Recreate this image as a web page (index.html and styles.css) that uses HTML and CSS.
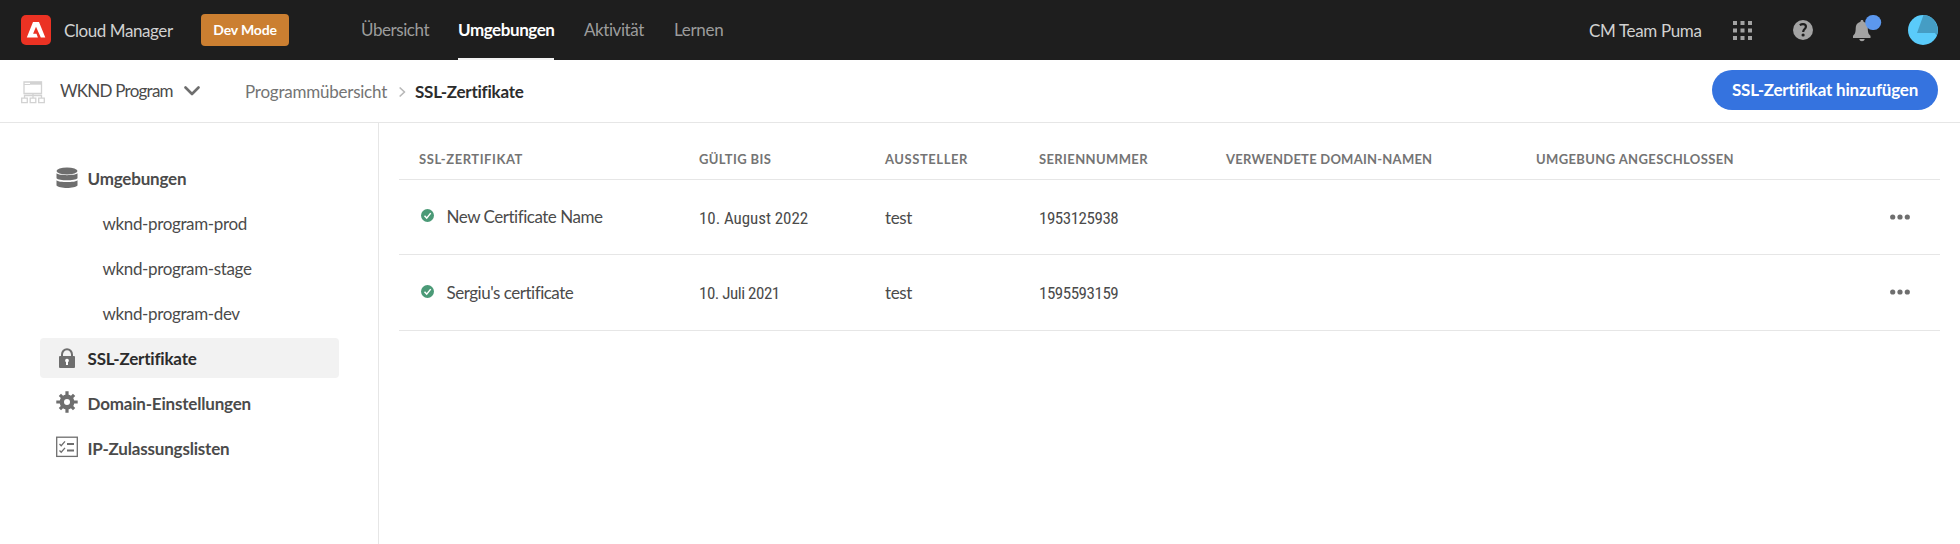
FILE: index.html
```html
<!DOCTYPE html>
<html lang="de">
<head>
<meta charset="utf-8">
<title>Cloud Manager – SSL-Zertifikate</title>
<link rel="stylesheet" href="styles.css">
</head>
<body>
<header class="topbar">
  <svg class="logo" viewBox="0 0 30 30"><rect width="30" height="30" rx="5" fill="#eb3223"/><path fill="#fff" d="M12 7h6l6.300 15.500h-4.500L15 11.800l-2.900 7h3.400l1.400 3.700H5.800z"/></svg>
  <span class="brand">Cloud Manager</span>
  <span class="mode">Dev Mode</span>
  <nav class="nav">
    <a class="tab overview">Übersicht</a>
    <a class="tab environments active">Umgebungen</a>
    <a class="tab activity">Aktivität</a>
    <a class="tab learn">Lernen</a>
  </nav>
  <div class="tools">
    <span class="org">CM Team Puma</span>
    <svg class="apps" viewBox="0 0 19 19" fill="#a3a3a3"><path d="M0 0h4v4H0zM7.500 0h4v4h-4zM15 0h4v4h-4zM0 7.500h4v4H0zM7.500 7.500h4v4h-4zM15 7.500h4v4h-4zM0 15h4v4H0zM7.500 15h4v4h-4zM15 15h4v4h-4z"/></svg>
    <svg class="help" viewBox="0 0 20 20"><circle cx="10" cy="10" r="10" fill="#a3a3a3"/><path d="M6.800 5.200C8 4.400 9 4.200 10 4.200c1.800 0 2.900 1 2.900 2.500 0 2.300-2.700 2.500-2.700 5.200" fill="none" stroke="#1e1e1e" stroke-width="2.200"/><circle cx="10.100" cy="15" r="1.600" fill="#1e1e1e"/></svg>
    <svg class="bell" viewBox="0 0 30 30"><path fill="#a3a3a3" d="M9 5c1.100 0 1.500.700 1.500 1.700 3 .800 4.300 3.300 4.300 6.500 0 4.500 1 6 2.700 7.500V23H0v-2.300c1.700-1.500 2.700-3 2.700-7.500 0-3.200 1.600-5.700 4.800-6.500C7.500 5.700 7.900 5 9 5zM6.300 24h5.400c-.300 1.500-1.300 2.200-2.700 2.200S6.600 25.500 6.300 24z"/><rect x="12.200" width="16" height="15" rx="7.500" fill="#5c98ee"/></svg>
    <svg class="avatar" viewBox="0 0 30 30"><circle cx="15" cy="15" r="15" fill="#5acbfa"/><path d="M15.500 0A15 15 0 0 1 28.600 20.600L27 18H9z" fill="#459dc4"/></svg>
  </div>
</header>
<div class="subbar">
  <svg class="program" viewBox="0 0 24 23" fill="none" stroke="#d2d2d2"><path d="M3 1h17.500v11.500H3zM12 12.500V17M3.500 17v-2.500h17V17M.7 17.200h5.600v4.500H.7zM9.200 17.200h5.600v4.500H9.200zM17.700 17.200h5.600v4.500h-5.600z" stroke-width="1.300"/><path d="M9 2.200h12" stroke-width="3"/><path d="M3 3.500h6" stroke-width="1"/></svg>
  <span class="program-name">WKND Program</span>
  <svg class="chev" viewBox="0 0 16 10"><path d="M1.500 1.500 8 8l6.500-6.500" fill="none" stroke="#6e6e6e" stroke-width="2.600" stroke-linecap="round" stroke-linejoin="round"/></svg>
  <span class="crumb">Programmübersicht</span>
  <svg class="sep" viewBox="0 0 7 10"><path d="M1.200 1 5.500 5l-4.300 4" fill="none" stroke="#b8b8b8" stroke-width="1.700" stroke-linecap="round" stroke-linejoin="round"/></svg>
  <span class="crumb current">SSL-Zertifikate</span>
  <button class="add">SSL-Zertifikat hinzufügen</button>
</div>
<div class="layout">
  <aside class="side">
    <a class="item"><svg viewBox="0 0 22 22" fill="#6e6e6e"><ellipse cx="11" cy="4" rx="10.500" ry="3.500"/><path d="M.5 6.300C3 8.800 19 8.800 21.500 6.300v4.900c-2.500 2.700-18.500 2.700-21 0zM.5 13.200c2.500 2.500 18.500 2.500 21 0v5.300c-2.500 3.300-18.500 3.300-21 0z"/></svg><span>Umgebungen</span></a>
    <a class="item child"><span>wknd-program-prod</span></a>
    <a class="item child"><span>wknd-program-stage</span></a>
    <a class="item child"><span>wknd-program-dev</span></a>
    <a class="item selected"><svg viewBox="0 0 22 22"><path d="M6 10V7.500a5 5.300 0 0 1 10 0V10" fill="none" stroke="#6e6e6e" stroke-width="2"/><rect x="3" y="9" width="16" height="12" rx="1" fill="#6e6e6e"/><path d="M11 11.700a1.900 1.900 0 0 1 1 3.500V18h-2v-2.800a1.900 1.900 0 0 1 1-3.500z" fill="#fff"/></svg><span>SSL-Zertifikate</span></a>
    <a class="item"><svg class="raised" viewBox="0 0 22 22"><g stroke="#6e6e6e" stroke-width="3.200"><path d="M11 .3v21.400M.3 11h21.400M3.900 3.900l14.200 14.200M18.100 3.900 3.900 18.100"/></g><circle cx="11" cy="11" r="7.400" fill="#6e6e6e"/><circle cx="11" cy="11" r="3" fill="#fff"/></svg><span>Domain-Einstellungen</span></a>
    <a class="item"><svg class="raised" viewBox="0 0 22 22" fill="none" stroke="#6e6e6e"><rect x=".7" y="1.200" width="20.600" height="19.200" stroke-width="1.300"/><path d="m3.500 8 1.700 1.700L9 5.300M3.500 14.500l1.700 1.700L9 11.800" stroke-width="1.300"/><path d="M11 8h7M11 14.500h7" stroke-width="2.200"/></svg><span>IP-Zulassungslisten</span></a>
  </aside>
  <main class="main">
    <div class="row head"><span class="wide">SSL-Zertifikat</span><span>Gültig bis</span><span class="wide">Aussteller</span><span>Seriennummer</span><span class="tight">Verwendete Domain-Namen</span><span>Umgebung angeschlossen</span><span></span></div>
    <div class="row"><div class="name"><svg viewBox="0 0 13 13"><circle cx="6.500" cy="6.500" r="6.500" fill="#4b9a77"/><path d="m3.500 6.800 2.200 2.300 4-5" fill="none" stroke="#fff" stroke-width="1.500"/></svg>New Certificate Name</div><span class="date">10. August 2022</span><span>test</span><span class="num">1953125938</span><span></span><span></span><svg class="more" viewBox="0 0 20 6" fill="#6e6e6e"><circle cx="2.700" cy="3" r="2.600"/><circle cx="10" cy="3" r="2.600"/><circle cx="17.300" cy="3" r="2.600"/></svg></div>
    <div class="row second"><div class="name"><svg viewBox="0 0 13 13"><circle cx="6.500" cy="6.500" r="6.500" fill="#4b9a77"/><path d="m3.500 6.800 2.200 2.300 4-5" fill="none" stroke="#fff" stroke-width="1.500"/></svg>Sergiu's certificate</div><span class="num">10. Juli 2021</span><span>test</span><span class="num">1595593159</span><span></span><span></span><svg class="more" viewBox="0 0 20 6" fill="#6e6e6e"><circle cx="2.700" cy="3" r="2.600"/><circle cx="10" cy="3" r="2.600"/><circle cx="17.300" cy="3" r="2.600"/></svg></div>
  </main>
</div>
</body>
</html>
```
FILE: styles.css
```css
* { box-sizing: border-box; }
body {
  margin: 0;
  height: 544px;
  display: flex;
  flex-direction: column;
  overflow: hidden;
  background: #fff;
  color: #4b4b4b;
  font: 17px/24px Lato, "Open Sans", sans-serif;
  letter-spacing: -.4px;
  white-space: nowrap;
}
svg { flex: none; display: block; }
.topbar {
  flex: none;
  height: 60px;
  display: flex;
  align-items: center;
  padding: 0 22px 0 21px;
  background: #1e1e1e;
  color: #d1d1d1;
}
.logo { width: 30px; height: 30px; margin-right: 13px; }
.brand { width: 137px; padding-top: 1px; letter-spacing: -.42px; }
.mode {
  width: 88px;
  height: 32px;
  border-radius: 4px;
  background: #cb7f31;
  color: #fff;
  font-size: 14px;
  font-weight: 700;
  line-height: 31px;
  letter-spacing: -.16px;
  text-align: center;
}
.nav { display: flex; gap: 30px; margin-left: 72px; height: 60px; }
.tab { line-height: 60px; color: #9c9c9c; letter-spacing: -.43px; }
.tab.active { color: #fff; font-weight: 700; box-shadow: inset 0 -2px #f2f2f2; }
.overview { width: 67px; }
.environments { width: 96px; }
.activity { width: 60px; }
.learn { letter-spacing: -.3px; }
.tools { display: flex; align-items: center; margin-left: auto; }
.org { width: 144px; padding-top: 1px; letter-spacing: -.35px; }
.apps { width: 19px; height: 19px; margin-right: 41px; }
.help { width: 20px; height: 20px; margin-right: 40px; }
.bell { width: 30px; height: 30px; margin-right: 25px; }
.avatar { width: 30px; height: 30px; }
.subbar {
  flex: none;
  height: 63px;
  display: flex;
  align-items: center;
  padding: 0 22px 2px 21px;
  border-bottom: 1px solid #e6e6e6;
}
.program { width: 24px; height: 23px; margin: 5px 15px 0 0; }
.program-name { width: 124px; padding-top: 1px; letter-spacing: -.76px; }
.chev { width: 16px; height: 10px; margin: 2px 45px 0 0; }
.crumb { width: 154px; padding-top: 4px; color: #747474; letter-spacing: -.23px; }
.sep { width: 7px; height: 10px; margin: 3px 9px 0 0; }
.current { color: #2c2c2c; font-weight: 700; }
.add {
  width: 226px;
  height: 40px;
  margin-left: auto;
  padding: 0;
  border: 0;
  border-radius: 20px;
  background: #3573df;
  color: #fff;
  font: 700 17px/40px Lato, sans-serif;
  letter-spacing: -.2px;
}
.layout { flex: 1; display: flex; }
.side {
  width: 379px;
  display: flex;
  flex-direction: column;
  gap: 5px;
  padding: 35px 39px 0 40px;
  border-right: 1px solid #e6e6e6;
}
.item {
  height: 40px;
  display: flex;
  align-items: center;
  gap: 10px;
  padding-left: 15.5px;
  border-radius: 4px;
  font-weight: 700;
  letter-spacing: -.19px;
}
.item span { padding-top: 1px; }
.item svg { width: 22px; height: 22px; }
.item .raised { margin-top: -2px; }
.child { padding-left: 62.5px; font-weight: 400; letter-spacing: -.36px; }
.selected { background: #f2f2f2; color: #2c2c2c; }
.main { flex: 1; padding: 0 20px; }
.row {
  height: 75px;
  display: grid;
  grid-template-columns: 280px 186px 154px 187px 310px 354px 20px;
  align-items: center;
  padding-left: 20px;
  border-bottom: 1px solid #e6e6e6;
}
.row > span { padding-top: 1px; }
.second { height: 76px; }
.second .more { margin-top: -2px; }
.head {
  height: 57px;
  padding-top: 15px;
  color: #747474;
  font-size: 13px;
  font-weight: 700;
  letter-spacing: .38px;
  text-transform: uppercase;
}
.wide { letter-spacing: .56px; }
.tight { letter-spacing: .24px; }
.head ~ .row .date, .num { font-family: Roboto, sans-serif; font-stretch: 87.5%; letter-spacing: -.06px; }
.num { letter-spacing: -.47px; }
.name { display: flex; align-items: center; gap: 12.5px; padding-left: 2px; letter-spacing: -.48px; }
.name svg { width: 13px; height: 13px; margin-top: -3px; }
.more { width: 20px; height: 6px; }
```
